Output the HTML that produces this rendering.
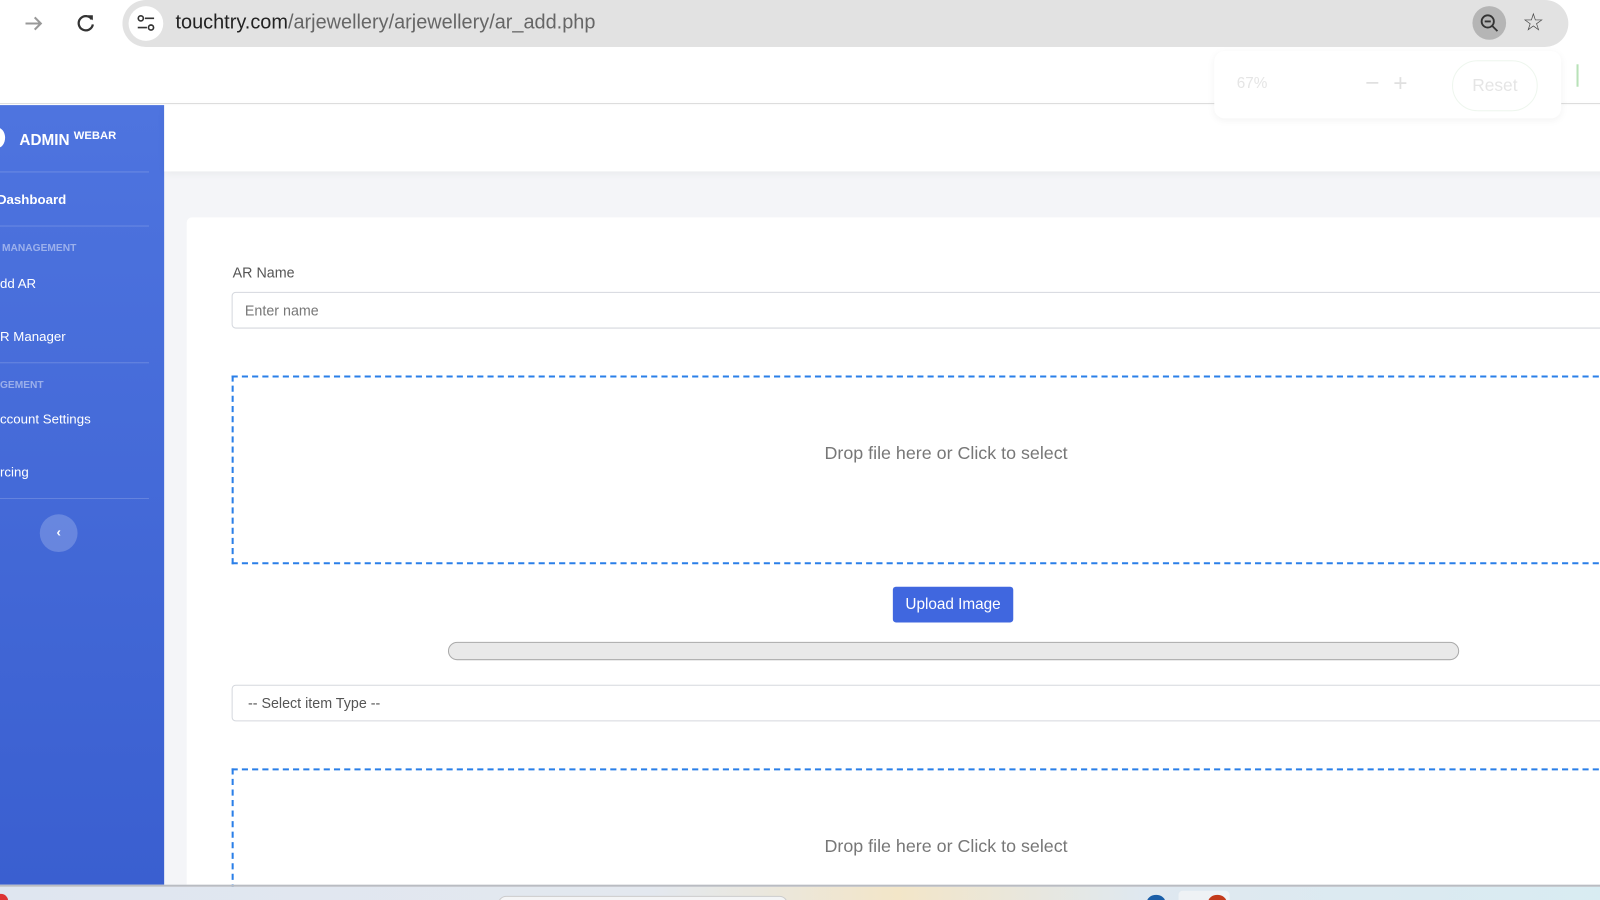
<!DOCTYPE html>
<html><head><style>
*{margin:0;padding:0;box-sizing:border-box}
body{width:1600px;height:900px;overflow:hidden;font-family:"Liberation Sans",sans-serif;background:#fff;position:relative}
#w{position:absolute;left:0;top:0;width:1568px;height:882px;transform:scale(1.0204);transform-origin:0 0;overflow:hidden}
.abs{position:absolute}
.sb a,.sb div{position:absolute;color:#fff;font-size:13px}
</style></head><body><div id="w">
<div class="abs" style="left:0;top:0;width:1600px;height:102px;background:#fff;border-bottom:1px solid #ddd"></div>
<svg class="abs" style="left:22px;top:12px" width="22" height="22" viewBox="0 0 22 22"><path d="M3 11h15M12 5l6 6-6 6" stroke="#999" stroke-width="2" fill="none"/></svg>
<svg class="abs" style="left:73px;top:12px" width="22" height="22" viewBox="0 0 22 22"><path d="M17 7A7 7 0 1 0 18 12" stroke="#333" stroke-width="2.2" fill="none"/><path d="M13 3h5v5z" fill="#333"/></svg>
<div class="abs" style="left:120px;top:0;width:1417px;height:46px;background:#e2e2e2;border-radius:23px"></div>
<div class="abs" style="left:126px;top:6px;width:34px;height:34px;background:#fff;border-radius:50%"></div>
<svg class="abs" style="left:134px;top:13px" width="18" height="20" viewBox="0 0 18 20"><circle cx="4" cy="5" r="2.5" stroke="#333" stroke-width="1.6" fill="none"/><path d="M8 5h9M1 14h9" stroke="#333" stroke-width="1.6"/><circle cx="14" cy="14" r="2.5" stroke="#333" stroke-width="1.6" fill="none"/></svg>
<div class="abs" style="left:172px;top:11px;font-size:19.5px;color:#222">touchtry.com<span style="color:#666">/arjewellery/arjewellery/ar_add.php</span></div>
<div class="abs" style="left:1443px;top:6px;width:33px;height:33px;border-radius:50%;background:#b5b5b5"></div>
<svg class="abs" style="left:1449px;top:12px" width="22" height="22" viewBox="0 0 22 22"><circle cx="9" cy="9" r="6" stroke="#333" stroke-width="1.8" fill="none"/><path d="M6 9h6M13.5 13.5l5 5" stroke="#333" stroke-width="1.8"/></svg>
<div class="abs" style="left:1492px;top:8px;font-size:24px;color:#444">☆</div>
<div class="abs sb" style="left:0;top:103px;width:161px;height:764px;background:linear-gradient(#4e74df,#3a5fd0)">
<div style="left:-10px;top:22px;width:15px;height:20px;border-radius:50%;background:#fff"></div>
<div style="left:19px;top:24px;font-weight:bold;font-size:15px">ADMIN <sup style="font-size:11px">WEBAR</sup></div>
<div style="left:0;top:65px;width:146px;height:1px;background:rgba(255,255,255,.18)"></div>
<div style="top:85px;left:-3px;font-weight:bold">Dashboard</div>
<div style="left:0;top:118px;width:146px;height:1px;background:rgba(255,255,255,.18)"></div>
<div style="top:135px;left:2px;font-size:10px;font-weight:bold;color:rgba(255,255,255,.45)">MANAGEMENT</div>
<div style="top:167px;left:0">dd AR</div>
<div style="top:219px;left:0">R Manager</div>
<div style="left:0;top:252px;width:146px;height:1px;background:rgba(255,255,255,.18)"></div>
<div style="top:269px;left:0;font-size:10px;font-weight:bold;color:rgba(255,255,255,.45)">GEMENT</div>
<div style="top:300px;left:0">ccount Settings</div>
<div style="top:352px;left:0">rcing</div>
<div style="left:0;top:385px;width:146px;height:1px;background:rgba(255,255,255,.18)"></div>
<div style="left:39px;top:401px;width:37px;height:37px;border-radius:50%;background:rgba(255,255,255,.2);text-align:center;line-height:36px;font-weight:bold">‹</div>
</div>
<div class="abs" style="left:161px;top:103px;width:1439px;height:764px;background:#f4f5f8"></div>
<div class="abs" style="left:161px;top:103px;width:1439px;height:65px;background:#fff;box-shadow:0 2px 8px rgba(0,0,0,.05)"></div>
<div class="abs" style="left:183px;top:213px;width:1417px;height:654px;background:#fff;border-radius:5px 0 0 0"></div>
<div class="abs" style="left:228px;top:259px;font-size:14px;color:#555">AR Name</div>
<div class="abs" style="left:227px;top:286px;width:1380px;height:36px;border:1px solid #d5d8de;border-radius:4px;font-size:14px;color:#777;padding:9px 12px">Enter name</div>
<div class="abs" style="left:227px;top:368px;width:1380px;height:185px;border:2px dashed #2a7fe8"></div>
<div class="abs" style="left:808px;top:434px;font-size:17.5px;color:#777">Drop file here or Click to select</div>
<div class="abs" style="left:875px;top:575px;width:118px;height:35px;background:#4067df;border-radius:3px;color:#fff;font-size:15px;text-align:center;line-height:35px">Upload Image</div>
<div class="abs" style="left:439px;top:629px;width:991px;height:18px;border:1px solid #aaa;border-radius:9px;background:#e9e9e9"></div>
<div class="abs" style="left:227px;top:671px;width:1380px;height:36px;border:1px solid #d5d8de;border-radius:4px;font-size:14px;color:#555;padding:9px 15px">-- Select item Type --</div>
<div class="abs" style="left:227px;top:753px;width:1380px;height:130px;border:2px dashed #2a7fe8;border-bottom:none"></div>
<div class="abs" style="left:808px;top:819px;font-size:17.5px;color:#777">Drop file here or Click to select</div>
<div class="abs" style="left:1190px;top:50px;width:340px;height:66px;background:#fff;border-radius:10px;box-shadow:0 2px 8px rgba(0,0,0,.05)"></div>
<div class="abs" style="left:1212px;top:73px;font-size:15px;color:#e5e5e5">67%</div>
<div class="abs" style="left:1338px;top:68px;font-size:24px;color:#e0e0e0">−&nbsp;&nbsp;+</div>
<div class="abs" style="left:1423px;top:59px;width:84px;height:50px;border:1px solid #eef6ee;border-radius:25px;color:#e5e5e5;font-size:17px;text-align:center;line-height:48px">Reset</div>
<div class="abs" style="left:1545px;top:63px;width:2px;height:22px;background:#b8e2b8"></div>
<div class="abs" style="left:0;top:867px;width:1600px;height:33px;background:linear-gradient(90deg,#dfe6f0,#e3e8ef 40%,#f3e6c8 55%,#dfe8f0 70%,#d8ecf2);border-top:2px solid #b9bcc2"></div>
<div class="abs" style="left:-6px;top:876px;width:14px;height:14px;border-radius:50%;background:#d33"></div>
<div class="abs" style="left:488px;top:878px;width:284px;height:22px;border-radius:8px;background:#f4f5f6;border:1px solid #ccc"></div>
<div class="abs" style="left:1124px;top:877px;width:18px;height:14px;border-radius:50%;background:#1a5ea8"></div>
<div class="abs" style="left:1155px;top:873px;width:50px;height:27px;background:#eef2f5;border-radius:4px"></div>
<div class="abs" style="left:1184px;top:877px;width:18px;height:14px;border-radius:50%;background:#c33a1a"></div>
</div></body></html>
